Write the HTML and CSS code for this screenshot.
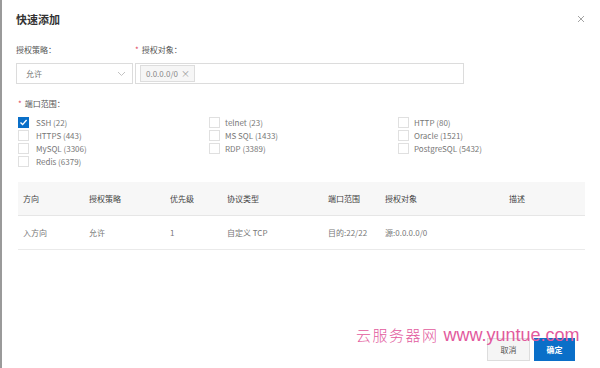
FILE: index.html
```html
<!DOCTYPE html>
<html lang="zh-CN">
<head>
<meta charset="utf-8">
<link rel="stylesheet" href="styles.css">
</head>
<body>
<div class="dialog">
  <div class="head">
    <h1 class="title">快速添加</h1>
    <svg class="close" width="8" height="8" viewBox="0 0 8 8"><path d="M1 1L7 7M7 1L1 7" stroke="#999" stroke-width="0.9" fill="none"/></svg>
  </div>
  <div class="form-row">
    <div class="field f-policy">
      <div class="lbl">授权策略：</div>
      <div class="select"><span>允许</span><svg width="9" height="6" viewBox="0 0 9 6"><path d="M1 1L4.5 4.5L8 1" stroke="#bbb" stroke-width="0.9" fill="none"/></svg></div>
    </div>
    <div class="field f-obj">
      <div class="lbl"><span class="req">*</span>授权对象：</div>
      <div class="input"><span class="tag">0.0.0.0/0<span class="tag-x">×</span></span></div>
    </div>
  </div>
  <div class="lbl port-lbl"><span class="req">*</span>端口范围：</div>
  <div class="checks">
    <div class="chk"><span class="box on"><svg width="9" height="9" viewBox="0 0 9 9"><path d="M1.5 4.6L3.6 6.6L7.6 2" stroke="#fff" stroke-width="1.4" fill="none"/></svg></span>SSH (22)</div>
    <div class="chk"><span class="box"></span>telnet (23)</div>
    <div class="chk"><span class="box"></span>HTTP (80)</div>
    <div class="chk"><span class="box"></span>HTTPS (443)</div>
    <div class="chk"><span class="box"></span>MS SQL (1433)</div>
    <div class="chk"><span class="box"></span>Oracle (1521)</div>
    <div class="chk"><span class="box"></span>MySQL (3306)</div>
    <div class="chk"><span class="box"></span>RDP (3389)</div>
    <div class="chk"><span class="box"></span>PostgreSQL (5432)</div>
    <div class="chk"><span class="box"></span>Redis (6379)</div>
  </div>
  <table class="rules">
    <colgroup><col class="c1"><col class="c2"><col class="c3"><col class="c4"><col class="c5"><col class="c6"><col class="c7"></colgroup>
    <thead>
      <tr><th>方向</th><th>授权策略</th><th>优先级</th><th>协议类型</th><th>端口范围</th><th>授权对象</th><th>描述</th></tr>
    </thead>
    <tbody>
      <tr><td>入方向</td><td>允许</td><td>1</td><td>自定义 TCP</td><td>目的:22/22</td><td>源:0.0.0.0/0</td><td></td></tr>
    </tbody>
  </table>
  <div class="footer">
    <button class="btn">取消</button>
    <button class="btn primary">确定</button>
  </div>
  <div class="watermark"><span class="wm-cn">云服务器网</span> www.yuntue.com</div>
</div>
</body>
</html>
```

FILE: styles.css
```css
html, body {
  margin: 0;
  padding: 0;
  background: #fff;
}
body {
  font-family: "Noto Sans CJK SC", "Noto Sans", sans-serif;
  color: #666;
}
.dialog {
  position: relative;
  box-sizing: border-box;
  width: 600px;
  height: 368px;
  border-left: 2px solid #9a9a9a;
  padding: 12px 16px 7px 14px;
  display: flex;
  flex-direction: column;
  overflow: hidden;
}
.head {
  display: flex;
  justify-content: space-between;
  align-items: center;
  height: 14px;
}
.title {
  margin: 0;
  font-size: 11px;
  line-height: 14px;
  font-weight: 700;
  color: #333;
}
.close {
  margin-right: -1px;
}
.lbl {
  font-size: 8px;
  line-height: 10px;
  color: #555;
}
.req {
  color: #e0445a;
  margin-right: 3px;
}
.form-row {
  display: flex;
  gap: 3px;
  margin-top: 19px;
}
.field {
  display: flex;
  flex-direction: column;
  gap: 8px;
}
.f-policy { width: 117px; }
.f-obj { width: 329px; margin-left: -1px; }
.select, .input {
  box-sizing: border-box;
  height: 21px;
  border: 1px solid #dcdcdc;
  display: flex;
  align-items: center;
  font-size: 8px;
  color: #777;
}
.select {
  justify-content: space-between;
  padding: 0 6px 0 9px;
}
.input {
  padding: 0 4px;
}
.tag {
  display: inline-flex;
  align-items: center;
  height: 15px;
  padding: 0 4px 0 5px;
  border: 1px solid #ddd;
  background: #f6f6f6;
  color: #888;
  font-size: 8px;
}
.tag-x {
  margin-left: 3px;
  font-size: 9px;
  color: #999;
}
.port-lbl {
  margin-top: 15px;
  padding-left: 2px;
}
.checks {
  margin-top: 8px;
  display: grid;
  grid-template-columns: 191px 189px auto;
  row-gap: 2px;
  padding-left: 2px;
}
.chk {
  display: flex;
  align-items: center;
  height: 11px;
  font-size: 8px;
  color: #777;
}
.box {
  box-sizing: border-box;
  width: 11px;
  height: 11px;
  border: 1px solid #e0e0e0;
  margin-right: 7px;
  display: inline-flex;
  align-items: center;
  justify-content: center;
  flex-shrink: 0;
}
.chk:nth-child(3n+2) .box, .chk:nth-child(3n) .box { margin-right: 5px; }
.box.on {
  background: #0a6fc8;
  border-color: #0a6fc8;
}
.rules {
  margin-top: 15px;
  margin-left: 2px;
  width: 567px;
  border-collapse: collapse;
  table-layout: fixed;
  font-size: 8px;
}
.c1 { width: 66px; }
.c2 { width: 81px; }
.c3 { width: 57px; }
.c4 { width: 101px; }
.c5 { width: 57px; }
.c6 { width: 124px; }
.rules th {
  background: #f7f7f7;
  height: 33px;
  padding: 0 0 0 5px;
  text-align: left;
  font-weight: 400;
  color: #444;
  border-bottom: 1px solid #e6e6e6;
}
.rules td {
  height: 33px;
  padding: 0 0 0 5px;
  color: #777;
  border-bottom: 1px solid #eaeaea;
}
.footer {
  margin-top: auto;
  display: flex;
  justify-content: flex-end;
  gap: 4px;
  padding-right: 9px;
}
.btn {
  box-sizing: border-box;
  height: 23px;
  width: 43px;
  border: 1px solid #ddd;
  background: #f5f5f5;
  color: #555;
  font-family: inherit;
  font-size: 8px;
  line-height: 10px;
  padding: 0;
}
.btn.primary {
  width: 41px;
  background: #0a6fc8;
  border-color: #0a6fc8;
  color: #fff;
  font-weight: 700;
}
.watermark {
  position: absolute;
  left: 354px;
  top: 327px;
  font-family: "Liberation Sans", sans-serif;
  font-size: 18px;
  line-height: 15px;
  color: #e25a9d;
  white-space: nowrap;
}
.wm-cn {
  font-family: "Noto Sans CJK SC", sans-serif;
  font-size: 15px;
  font-weight: 300;
  letter-spacing: 1.5px;
}
```
